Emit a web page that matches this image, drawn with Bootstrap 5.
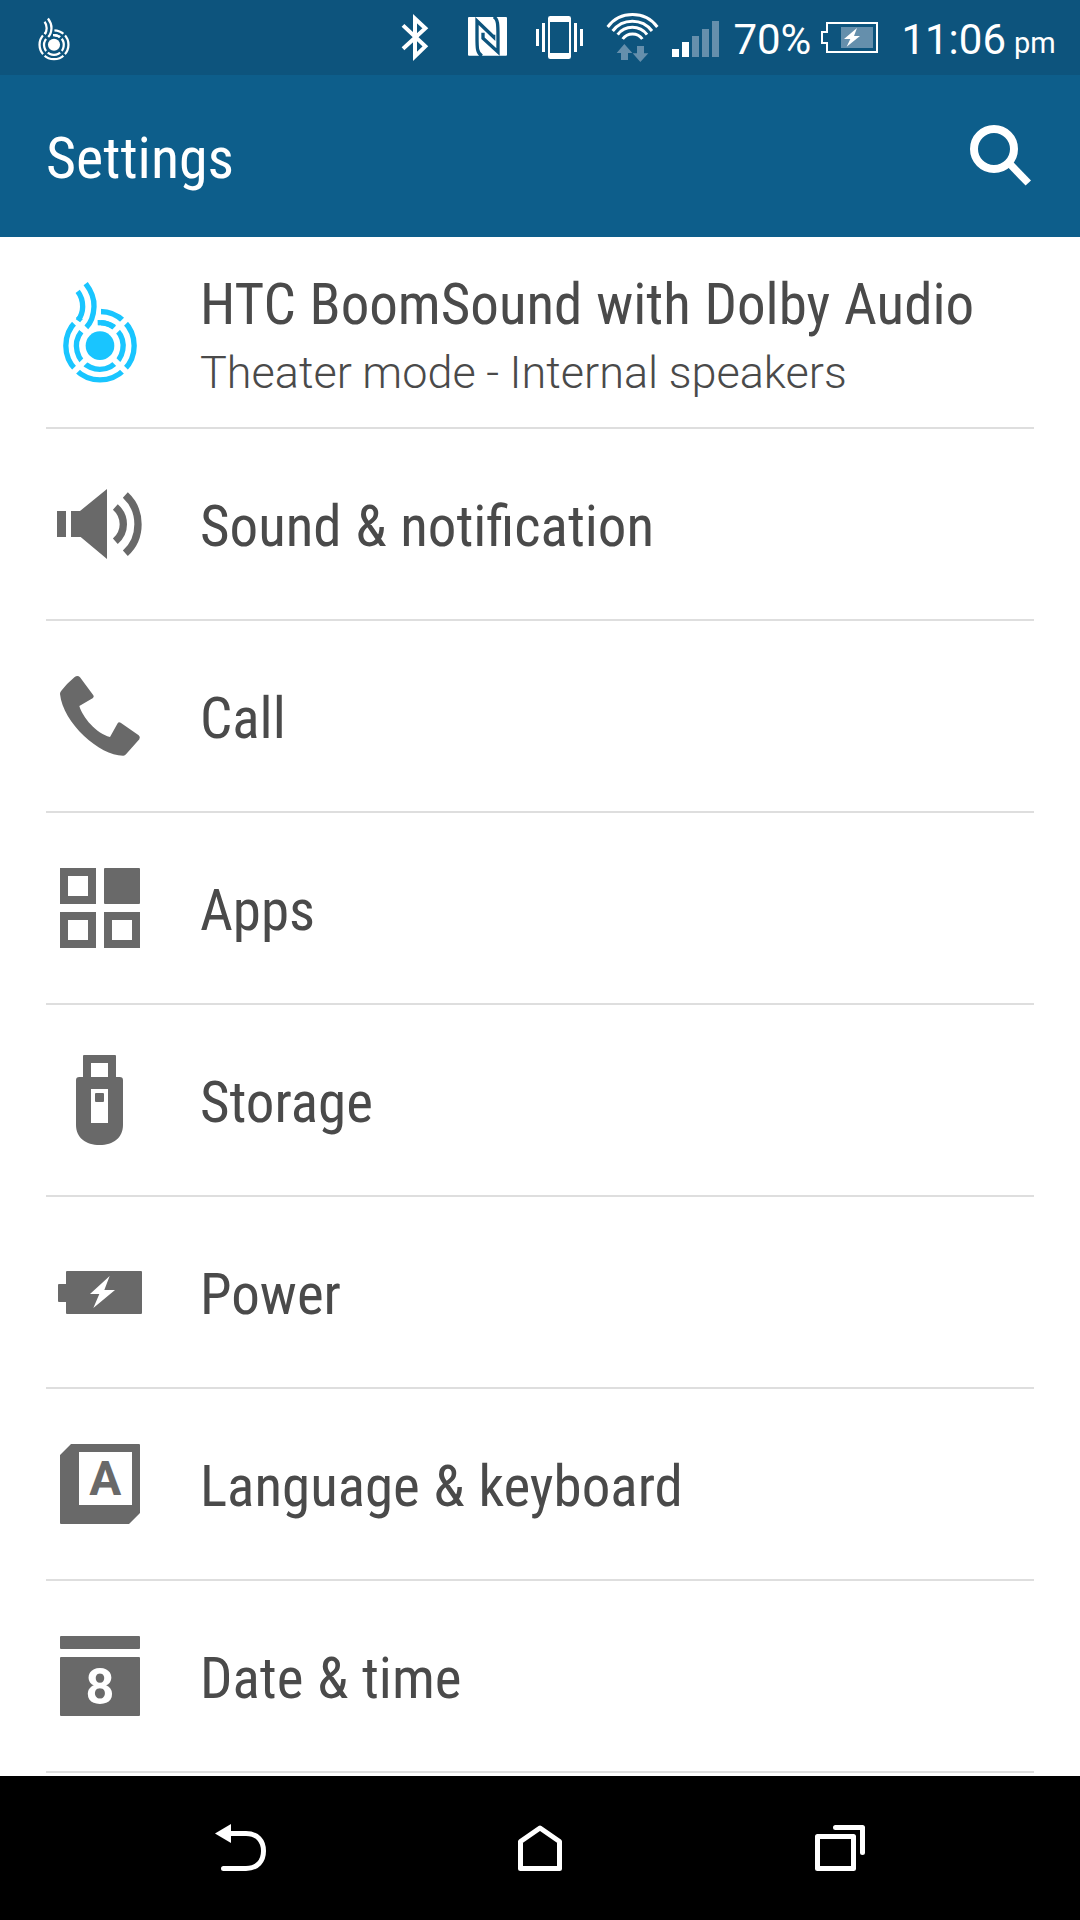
<!DOCTYPE html>
<html lang="en">
<head>
<meta charset="utf-8">
<meta name="viewport" content="width=device-width, initial-scale=1">
<title>Settings</title>
<link href="https://cdn.jsdelivr.net/npm/bootstrap@5.3.0/dist/css/bootstrap.min.css" rel="stylesheet">
<style>
  body { font-family: Roboto, sans-serif; color: #4a4a4a; background: #fff; }
  svg { display: block; flex: none; }
  .screen { width: 1080px; height: 1920px; }
  .status-bar { height: 75px; background: #0d547d; font-size: 42px; line-height: 75px; padding-left: 34px; }
  .status-bar span { padding-top: 2px; white-space: nowrap; }
  .charge { width: 78px; margin-left: 3px; }
  .clock { margin-left: 15px; }
  .status-bar .ampm { font-size: 29px; margin-left: 8px; padding-top: 6px; width: 66px; }
  .title-bar { height: 162px; background: #0d5e8b; padding-left: 46px; }
  .title-bar h1 { font: 400 58px/167px "Roboto Condensed", Roboto, sans-serif; }
  .settings-list { height: 1539px; padding: 0 46px; }
  .setting { height: 192px; border-bottom: 2px solid #dedede; color: inherit; }
  .setting svg { width: 108px; height: 190px; margin-right: 46px; fill: #696969; }
  .setting-name { font: 400 57px/64px "Roboto Condensed", Roboto, sans-serif; word-spacing: .7px; margin-top: 66px; }
  .setting-name.with-note { margin-top: 36px; }
  .setting-note { font-size: 45px; font-weight: 300; line-height: 56px; word-spacing: -.5px; margin-top: 8px; }
  .setting svg .boom { color: #19c5ff; }
  .glyph { font-family: Roboto, sans-serif; font-weight: 700; text-anchor: middle; }
  .nav-keys { height: 144px; }
  .dim { fill: #658fac; }
</style>
</head>
<body>
<svg width="0" height="0" class="position-absolute" aria-hidden="true">
  <defs>
    <mask id="gaps" maskUnits="userSpaceOnUse" x="80" y="50" width="260" height="330">
      <rect x="80" y="50" width="260" height="330" fill="#fff"/>
      <path d="M120 167L300 347M300 167L120 347" stroke="#000" stroke-width="17"/>
      <path d="M213 257V130H150V170L190 210L196 196L207 178Z" fill="#000"/>
    </mask>
    <symbol id="boomsound" viewBox="90 60 240 312">
      <g fill="none" stroke="currentColor" stroke-width="16">
        <g mask="url(#gaps)">
          <circle cx="210" cy="257" r="102.5"/>
          <path d="M205 188A70 70 0 1 1 154 215"/>
        </g>
        <path d="M203 188Q232 187 252 201"/>
        <path d="M167 71C187 97 193 118 192 140C191 163 184 187 169 202"/>
        <path d="M143 94C154 108 158 122 158 140C158 157 152 170 144 182"/>
      </g>
      <circle cx="210" cy="257" r="43" fill="currentColor"/>
    </symbol>
  </defs>
</svg>

<div class="screen d-flex flex-column overflow-hidden">
  <div class="status-bar d-flex text-white">
    <svg width="40" height="75" viewBox="34 0 40 75"><use href="#boomsound" x="37" y="17" width="34" height="44"/></svg>
    <div class="flex-grow-1"></div>
    <svg width="68" height="75" viewBox="0 0 204 225"><path d="M69 76L136 139L105 169V56L136 85L69 146" fill="none" stroke="#fff" stroke-width="12"/></svg>
    <svg width="74" height="75" viewBox="204 0 222 225">
      <rect x="264" y="51" width="117" height="116" rx="3" fill="#fff"/>
      <path d="M306 168C291 160 291 145 291 110V63L341 111V104M341 50C354 56 354 75 354 110V156L309 115V98" fill="none" stroke="#0d547d" stroke-width="10"/>
    </svg>
    <svg width="74" height="75" viewBox="426 0 222 225" fill="#fff">
      <path fill-rule="evenodd" d="M511 48H566Q573 48 573 55V170Q573 177 566 177H511Q504 177 504 170V55Q504 48 511 48ZM510 66V159H567V66Z"/>
      <path d="M468 87h9v51h-9zM486 69h9v87h-9zM582 69h9v87h-9zM600 87h9v51h-9z"/>
    </svg>
    <svg width="72" height="75" viewBox="648 0 216 225">
      <path d="M683 81A93 93 0 0 1 832 81M698 93A74 74 0 0 1 816 93M713 104A55 55 0 0 1 801 104M728 117A36 36 0 0 1 787 117" fill="none" stroke="#fff" stroke-width="9"/>
      <path class="dim" d="M733 132L757 159H744V180H723V159H710ZM771 138H792V160H805L781 186L758 160H771Z"/>
    </svg>
    <svg width="62" height="75" viewBox="864 0 186 225">
      <path fill="#fff" d="M876 147h21v24h-21zM906 126h21v45h-21z"/>
      <path class="dim" d="M936 108h21v63h-21zM966 87h21v84h-21zM996 63h21v108h-21z"/>
    </svg>
    <span class="charge">70%</span>
    <svg width="75" height="75" viewBox="273 0 225 225">
      <path class="dim" d="M363 81H459V144H363Z"/>
      <path d="M321 69H471V156H321V129H306V96H321Z" fill="none" stroke="#fff" stroke-width="6"/>
      <path d="M411 84L372 117H391L380 140L420 108H402Z" fill="#fff"/>
    </svg>
    <span class="clock">11:06</span><span class="ampm">pm</span>
  </div>

  <header class="title-bar d-flex justify-content-between text-white">
    <h1 class="m-0">Settings</h1>
    <svg width="120" height="162" viewBox="960 75 120 162" fill="none" stroke="#fff" role="img" aria-label="Search">
      <circle cx="994" cy="149" r="20" stroke-width="8"/><path d="M1008 162L1028.300 183" stroke-width="7.500"/>
    </svg>
  </header>

  <main class="settings-list overflow-hidden">
    <div class="setting d-flex">
      <svg viewBox="48 -69 324 570"><use class="boom" href="#boomsound" x="90" y="60" width="240" height="312"/></svg>
      <div><div class="setting-name with-note">HTC BoomSound with Dolby Audio</div><div class="setting-note">Theater mode - Internal speakers</div></div>
    </div>
    <div class="setting d-flex">
      <svg viewBox="48 -93 324 570">
        <path d="M81 153H108V231H81ZM123 153H150L231 87V297L152 231H123Z"/>
        <path d="M256 141Q280 162 280 193Q280 223 256 244M286 105Q324 140 324 193Q324 246 286 280" fill="none" stroke="#696969" stroke-width="22"/>
      </svg>
      <div class="setting-name">Sound &amp; notification</div>
    </div>
    <div class="setting d-flex">
      <svg viewBox="48 483 324 570"><path d="M134 651Q143 644 150 652L190 706Q193 710 189 714L148 738C158 772 198 820 240 831L263 790Q266 784 272 788L326 826Q332 831 328 838L288 883Q285 887 280 887C210 888 99 790 90 702Q90 696 94 692Q111 670 134 651Z"/></svg>
      <div class="setting-name">Call</div>
    </div>
    <div class="setting d-flex">
      <svg viewBox="48 -81 324 570">
        <rect x="222" y="84" width="108" height="108" rx="3"/>
        <path d="M102 96H186V180H102ZM102 228H186V312H102ZM234 228H318V312H234Z" fill="none" stroke="#696969" stroke-width="24"/>
      </svg>
      <div class="setting-name">Apps</div>
    </div>
    <div class="setting d-flex">
      <svg viewBox="48 495 324 570">
        <path fill-rule="evenodd" d="M162 645H255Q258 645 258 648V711H269Q279 711 279 721V855C279 893 250 915 209 915S138 893 138 855V721Q138 711 148 711H159V648Q159 645 162 645ZM183 669V711H234V669ZM183 747V849H234V747Z"/>
        <rect x="195" y="759" width="27" height="27" rx="3"/>
      </svg>
      <div class="setting-name">Storage</div>
    </div>
    <div class="setting d-flex">
      <svg viewBox="48 -129 324 570">
        <path d="M111 93H333Q336 93 336 96V219Q336 222 333 222H111Q108 222 108 219V186H87Q84 186 84 183V135Q84 132 87 132H108V96Q108 93 111 93Z"/>
        <path d="M239 108L180 162H208L190 204L255 150H223Z" fill="#fff"/>
      </svg>
      <div class="setting-name">Power</div>
    </div>
    <div class="setting d-flex">
      <svg viewBox="48 447 324 570">
        <path fill-rule="evenodd" d="M123 612H327Q330 612 330 615V819L297 852H93Q90 852 90 849V645ZM147 636V795H306V636Z"/>
        <text class="glyph" x="226" y="765" font-size="143">A</text>
      </svg>
      <div class="setting-name">Language &amp; keyboard</div>
    </div>
    <div class="setting d-flex">
      <svg viewBox="48 -57 324 570">
        <rect x="90" y="108" width="240" height="39" rx="3"/><rect x="90" y="171" width="240" height="177" rx="3"/>
        <text class="glyph" x="210" y="313" font-size="151" style="fill:#fff">8</text>
      </svg>
      <div class="setting-name">Date &amp; time</div>
    </div>
  </main>

  <nav class="nav-keys bg-black d-flex justify-content-center">
    <svg width="300" height="144" viewBox="90 1776 300 144" role="img" aria-label="Back">
      <path d="M215 1833.500L231 1824V1843Z" fill="#fff"/>
      <path d="M229 1833.500H246C257.500 1833.500 263.500 1841 263.500 1851S257.500 1868.500 246 1868.500H223.500" fill="none" stroke="#fff" stroke-width="5" stroke-linecap="round"/>
    </svg>
    <svg width="300" height="144" viewBox="390 1776 300 144" role="img" aria-label="Home"><path d="M520.500 1841.500L540 1828L559.500 1841.500V1868.500H520.500Z" fill="none" stroke="#fff" stroke-width="5" stroke-linejoin="round"/></svg>
    <svg width="300" height="144" viewBox="690 1776 300 144" role="img" aria-label="Recent apps" fill="none" stroke="#fff" stroke-width="5" stroke-linejoin="round" stroke-linecap="round"><path d="M817.500 1836.500H853.500V1868.500H817.500ZM835.500 1827.500H862.500V1852.500"/></svg>
  </nav>
</div>
<script src="https://cdn.jsdelivr.net/npm/bootstrap@5.3.0/dist/js/bootstrap.bundle.min.js"></script>
</body>
</html>
